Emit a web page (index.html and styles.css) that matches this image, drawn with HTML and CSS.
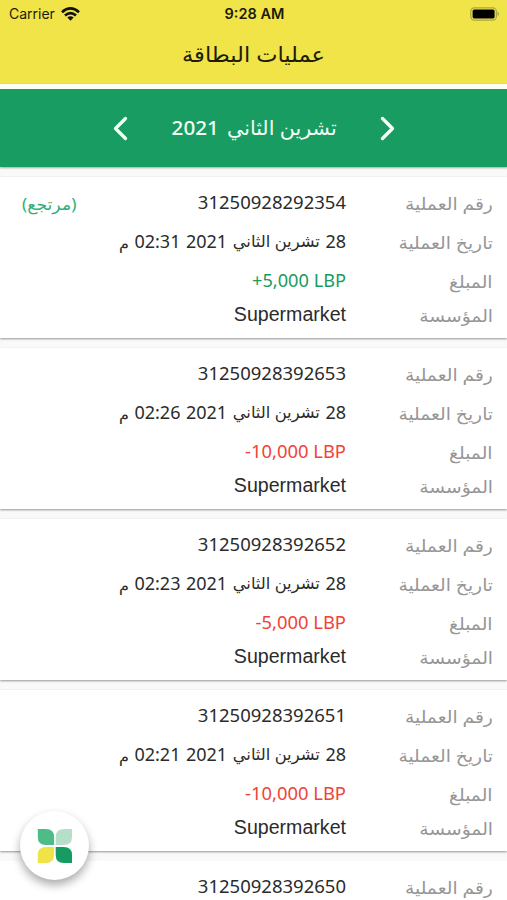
FILE: index.html
```html
<!DOCTYPE html>
<html lang="ar" dir="rtl">
<head>
<meta charset="utf-8">
<title>عمليات البطاقة</title>
<link rel="stylesheet" href="styles.css">
</head>
<body>
<header class="top">
  <div class="status" dir="ltr">
    <div class="carrier">Carrier
      <svg width="19" height="14" viewBox="0 0 19 14"><g fill="none" stroke="#111" stroke-width="2.7"><path d="M1 5.2Q9.5-2.3 18 5.2"/><path d="M4 8.6Q9.5 3.8 15 8.6"/></g><path d="M6.4 10.4Q9.5 8.2 12.6 10.4L9.5 13.8Z" fill="#111"/></svg>
    </div>
    <div class="clock">9:28 AM</div>
    <div class="battery"><svg width="30" height="14" viewBox="0 0 30 14"><rect x=".8" y=".8" width="25.6" height="12.4" rx="3.6" fill="none" stroke="#aaa542" stroke-width="1.2"/><rect x="2.6" y="2.6" width="22" height="8.8" rx="1.6" fill="#000"/><path d="M27.7 4.8Q30 7 27.7 9.2Z" fill="#94903c"/></svg></div>
  </div>
  <h1><span>عمليات البطاقة</span></h1>
</header>
<nav class="month">
  <svg width="15" height="25" viewBox="0 0 15 25"><path d="M2.500 2.500l10 10-10 10"/></svg>
  <div class="label"><span class="name">تشرين الثاني</span><span class="year">2021</span></div>
  <svg width="15" height="25" viewBox="0 0 15 25"><path d="M12.500 2.500l-10 10 10 10"/></svg>
</nav>
<main id="list"></main>
<button class="fab" aria-label="القائمة"><svg width="36" height="36" viewBox="0 0 36 36"><path fill="#4dbc86" d="M.8 1h8q8.300 0 8.300 8v8H9Q.8 17 .8 9z"/><path fill="#b5dfc9" d="M35 1h-8q-8.300 0-8.300 8v8h8q8.300 0 8.300-8z"/><path fill="#eee448" d="M.8 35h8q8.300 0 8.300-8v-8H9q-8.200 0-8.200 8z"/><path fill="#169b62" d="M35 35h-8q-8.300 0-8.300-8v-8h8q8.300 0 8.300 8z"/></svg></button>
<script src="app.js"></script>
</body>
</html>
```
FILE: styles.css
```css
* { box-sizing: border-box; }
body { margin: 0; width: 507px; height: 900px; overflow: hidden; position: relative; background: #f9f9f9; color: #2b2b2b; font-family: "Noto Sans", "DejaVu Sans", sans-serif; }
svg { display: block; }
.top { height: 84px; background: #f0e448; color: #1d1b0a; }
.status { display: grid; grid-template-columns: 1fr auto 1fr; align-items: center; height: 27px; padding: 0 7px 0 9px; font-family: Inter, sans-serif; font-size: 14px; }
.carrier { display: flex; align-items: center; gap: 6px; }
.clock { font-weight: 600; font-size: 14.5px; }
.battery { justify-self: end; }
h1 { margin: 0; height: 54px; display: flex; justify-content: center; align-items: center; font-weight: 400; font-size: 21px; white-space: nowrap; }
h1 span { transform: scaleX(1.075); }
.month { height: 83px; border-top: 5px solid #fffff4; background: #189c62; color: #f4fff8; display: flex; align-items: center; justify-content: space-between; padding: 0 112px 0 113px; box-shadow: 0 1px 2px #0005; }
.month path { fill: none; stroke: #f4fff8; stroke-width: 3.3; stroke-linecap: round; stroke-linejoin: round; }
.label { display: flex; align-items: center; gap: 8px; font-size: 20px; transform: translateY(-1px) scaleX(1.03); }
.year { font-weight: 500; }
.name { white-space: nowrap; }
main { padding-top: 10px; }
.card { height: 161px; margin-bottom: 10px; padding: 7px 14px 0 22px; background: #fff; box-shadow: 0 1px 2px #0006; display: grid; grid-template-columns: 147px 1fr auto; grid-template-rows: 39px 39px 39px 29px; align-items: center; font-size: 18px; white-space: nowrap; }
.card:last-child { height: 39px; margin: 0; padding-top: 14px; grid-template-rows: 26px; box-shadow: none; }
.row { display: grid; grid-column: 1 / -1; grid-template-columns: subgrid; align-items: center; line-height: 24px; }
.key { color: #969696; font-size: 17px; justify-self: start; transform: scaleX(1.1); transform-origin: right; }
.number { font-size: 18.5px; }
.number, .date, .plus, .minus { transform: translateY(-2.5px); }
.tag { color: #2fae78; font-size: 16px; transform: scaleX(1.08); transform-origin: left; }
.date { display: flex; gap: 5.5px; align-items: center; }
.date .name { font-size: 16.4px; }
.date .half { font-size: 16px; transform: translateY(2px); }
.plus { color: #189c62; font-size: 18.2px; }
.minus { color: #f04438; font-size: 18.4px; }
.shop { font-family: "Liberation Sans", sans-serif; font-size: 19.6px; transform: translateY(-2px); }
.fab { position: absolute; left: 20px; top: 811px; width: 69px; height: 69px; padding: 0; border: 0; border-radius: 50%; background: #fff; box-shadow: 0 5px 10px #0005; display: flex; align-items: center; justify-content: center; }
```
FILE: app.js
```js
const items = [
  ["31250928292354", "02:31", "+5,000 LBP", true],
  ["31250928392653", "02:26", "-10,000 LBP"],
  ["31250928392652", "02:23", "-5,000 LBP"],
  ["31250928392651", "02:21", "-10,000 LBP"],
  ["31250928392650"]
];
document.getElementById("list").innerHTML = items.map(([id, time, amount, refund]) => `
<section class="card">
  <div class="row"><span class="key">رقم العملية</span><span class="number">${id}</span>${refund ? '<span class="tag">(مرتجع)</span>' : ""}</div>
  ${time ? `<div class="row"><span class="key">تاريخ العملية</span><span class="date"><span>28</span><span class="name">تشرين الثاني</span><span>2021</span><span>${time}</span><span class="half">م</span></span></div>
  <div class="row"><span class="key">المبلغ</span><span class="${refund ? "plus" : "minus"}"><bdi dir="ltr">${amount}</bdi></span></div>
  <div class="row"><span class="key">المؤسسة</span><span class="shop">Supermarket</span></div>` : ""}
</section>`).join("");
```
